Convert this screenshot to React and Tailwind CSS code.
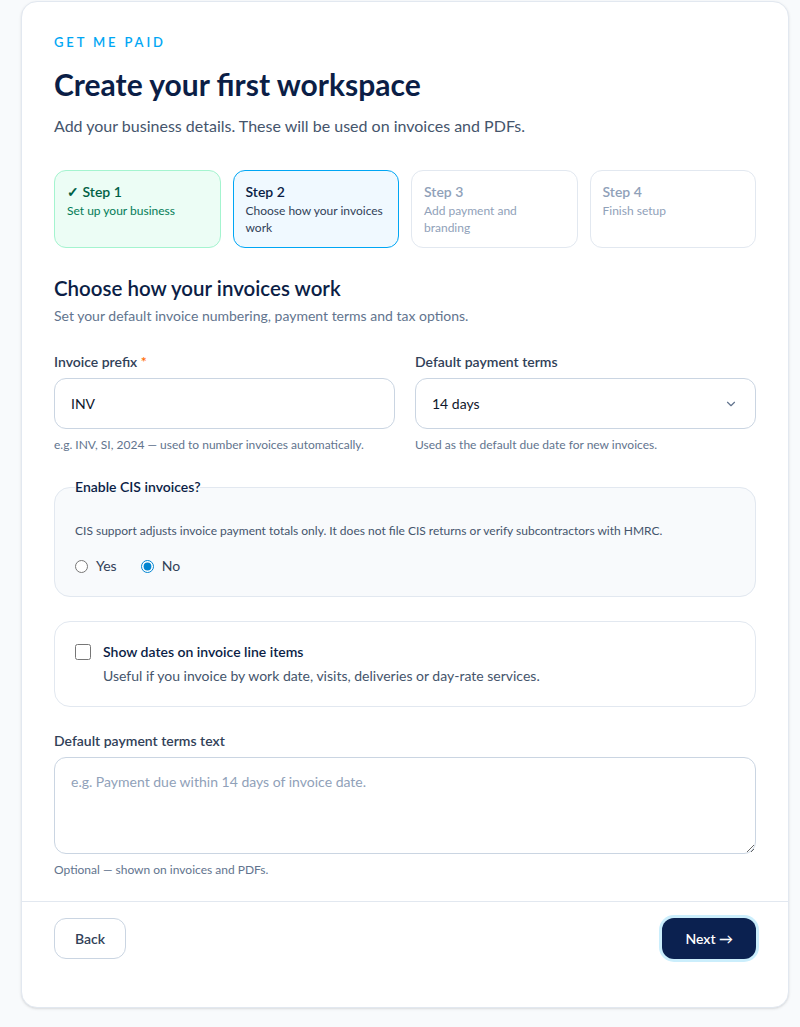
import { useState } from "react";
import { ChevronDown } from "lucide-react";

const steps = [
  { title: "✓ Step 1", text: "Set up your business", state: "done" },
  { title: "Step 2", text: "Choose how your invoices work", state: "current" },
  { title: "Step 3", text: "Add payment and branding", state: "todo" },
  { title: "Step 4", text: "Finish setup", state: "todo" },
];

function StepCard({ step }) {
  let box = "border-slate-200 bg-white";
  let title = "text-slate-400";
  let text = "text-slate-400";
  if (step.state === "done") {
    box = "border-emerald-200 bg-emerald-50";
    title = "text-emerald-800";
    text = "text-emerald-700";
  }
  if (step.state === "current") {
    box = "border-sky-500 bg-sky-50";
    title = "text-[#0b1e46]";
    text = "text-slate-700";
  }
  return (
    <div className={"rounded-xl border px-3 py-[11px] " + box}>
      <div className={"text-sm leading-5 font-semibold " + title}>{step.title}</div>
      <div className={"text-xs leading-[17px] " + text}>{step.text}</div>
    </div>
  );
}

export default function App() {
  const [prefix, setPrefix] = useState("INV");
  const [terms, setTerms] = useState("14");
  const [cis, setCis] = useState("no");
  const [showDates, setShowDates] = useState(false);
  const [termsText, setTermsText] = useState("");

  return (
    <div
      className="min-h-screen bg-slate-50 pl-[21px] pr-[11px] pt-px pb-5"
      style={{ fontFamily: "Lato, 'Noto Sans', sans-serif" }}
    >
      <div className="w-[768px] rounded-2xl border border-slate-200 bg-white shadow-sm">
        <div className="px-8 pt-8 pb-[23px]">
          <p className="text-[13px] leading-4 font-semibold tracking-[0.22em] text-sky-500">GET ME PAID</p>
          <h1 className="mt-4 text-[30px] leading-9 font-bold text-[#0b1e46]">Create your first workspace</h1>
          <p className="mt-3 text-base leading-6 text-slate-600">
            Add your business details. These will be used on invoices and PDFs.
          </p>

          <div className="mt-8 grid grid-cols-4 gap-3">
            {steps.map((s) => (
              <StepCard key={s.title} step={s} />
            ))}
          </div>

          <h2 className="mt-[26px] text-[20.5px] leading-7 font-semibold text-[#0b1e46]">Choose how your invoices work</h2>
          <p className="mt-1 text-sm leading-5 text-slate-500">
            Set your default invoice numbering, payment terms and tax options.
          </p>

          <div className="mt-[26px] grid grid-cols-2 gap-5">
            <div>
              <label className="block text-sm leading-5 font-semibold text-slate-700">
                Invoice prefix <span className="text-orange-500">*</span>
              </label>
              <input
                value={prefix}
                onChange={(e) => setPrefix(e.target.value)}
                className="mt-1.5 h-[51px] w-full rounded-xl border border-slate-300 px-4 text-sm text-slate-900 outline-none"
              />
              <p className="mt-2 text-xs leading-4 text-slate-500">
                e.g. INV, SI, 2024 — used to number invoices automatically.
              </p>
            </div>
            <div>
              <label className="block text-sm leading-5 font-semibold text-slate-700">Default payment terms</label>
              <div className="relative mt-1.5">
                <select
                  value={terms}
                  onChange={(e) => setTerms(e.target.value)}
                  className="h-[51px] w-full appearance-none rounded-xl border border-slate-300 bg-white px-4 text-sm text-slate-900 outline-none"
                >
                  <option value="7">7 days</option>
                  <option value="14">14 days</option>
                  <option value="30">30 days</option>
                </select>
                <ChevronDown
                  size={14}
                  strokeWidth={2}
                  className="pointer-events-none absolute right-[18px] top-[19px] text-slate-500"
                />
              </div>
              <p className="mt-2 text-xs leading-4 text-slate-500">Used as the default due date for new invoices.</p>
            </div>
          </div>

          <fieldset className="mt-6 rounded-2xl border border-slate-200 bg-slate-50 px-5 pt-6 pb-5">
            <legend className="text-sm leading-5 font-semibold text-[#0b1e46]">Enable CIS invoices?</legend>
            <p className="text-xs leading-5 text-slate-600">
              CIS support adjusts invoice payment totals only. It does not file CIS returns or verify subcontractors with HMRC.
            </p>
            <div className="mt-[15px] flex items-center gap-6 text-sm leading-5 text-slate-700">
              <label className="flex items-center gap-2">
                <input
                  type="radio"
                  name="cis"
                  checked={cis === "yes"}
                  onChange={() => setCis("yes")}
                  className="h-[13px] w-[13px] accent-sky-600"
                />
                Yes
              </label>
              <label className="flex items-center gap-2">
                <input
                  type="radio"
                  name="cis"
                  checked={cis === "no"}
                  onChange={() => setCis("no")}
                  className="h-[13px] w-[13px] accent-sky-600"
                />
                No
              </label>
            </div>
          </fieldset>

          <label className="mt-6 flex gap-3 rounded-2xl border border-slate-200 bg-white p-5">
            <input
              type="checkbox"
              checked={showDates}
              onChange={(e) => setShowDates(e.target.checked)}
              className="mt-0.5 h-4 w-4 accent-sky-600"
            />
            <span>
              <span className="block text-sm leading-5 font-semibold text-[#0b1e46]">Show dates on invoice line items</span>
              <span className="mt-1 block text-sm leading-5 text-slate-600">
                Useful if you invoice by work date, visits, deliveries or day-rate services.
              </span>
            </span>
          </label>

          <label className="mt-6 block text-sm leading-5 font-semibold text-slate-700">Default payment terms text</label>
          <textarea
            value={termsText}
            onChange={(e) => setTermsText(e.target.value)}
            placeholder="e.g. Payment due within 14 days of invoice date."
            className="mt-1.5 block h-[97px] w-full rounded-xl border border-slate-300 px-4 py-3 text-sm leading-6 text-slate-900 outline-none placeholder:text-slate-400"
          />
          <p className="mt-2 text-xs leading-4 text-slate-500">Optional — shown on invoices and PDFs.</p>
        </div>

        <div className="flex items-center justify-between border-t border-slate-200 px-8 pt-4 pb-12">
          <button className="h-[41px] rounded-xl border border-slate-300 bg-white px-5 text-sm font-semibold text-slate-700">
            Back
          </button>
          <button className="h-[41px] rounded-xl bg-[#0b2150] px-[23px] text-sm font-semibold text-white ring-[3px] ring-[#cbeefc]">
            Next →
          </button>
        </div>
      </div>
    </div>
  );
}
